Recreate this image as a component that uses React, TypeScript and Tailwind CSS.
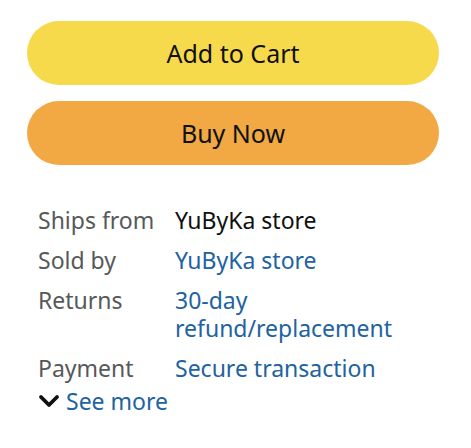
export default function App() {
  const rows = [
    { label: "Ships from", value: "YuByKa store", link: false },
    { label: "Sold by", value: "YuByKa store", link: true },
    { label: "Returns", value: "30-day refund/replacement", link: true },
    { label: "Payment", value: "Secure transaction", link: true },
  ]

  return (
    <div className="w-[471px] h-[448px] bg-white pl-[27px] pt-[21px] font-['Noto_Sans',sans-serif]">
      <button className="w-[412px] h-[64px] pt-[2px] rounded-full bg-[#F7D94C] text-[25px] text-[#0F1111]">
        Add to Cart
      </button>
      <button className="w-[412px] h-[64px] pt-[2px] mt-4 rounded-full bg-[#F2A843] text-[25px] text-[#0F1111]">
        Buy Now
      </button>

      <div className="mt-[41px] pl-[11px] grid grid-cols-[137px_1fr] gap-y-[12px] text-[23px] leading-[28px]">
        {rows.map((row) => (
          <div key={row.label} className="contents">
            <span className="text-[#565959]">{row.label}</span>
            <span className={row.link ? "text-[#2162A1] w-[240px]" : "text-[#0F1111]"}>{row.value}</span>
          </div>
        ))}
      </div>

      <div className="pl-[11px] flex items-center gap-[6px] text-[23px] leading-[28px] mt-[5px]">
        <svg width="22" height="16" viewBox="0 0 22 16" fill="none" stroke="#0F1111" strokeWidth="3.8" strokeLinecap="round" strokeLinejoin="round">
          <path d="M3 4l8 8 8-8" />
        </svg>
        <span className="text-[#2162A1]">See more</span>
      </div>
    </div>
  )
}
